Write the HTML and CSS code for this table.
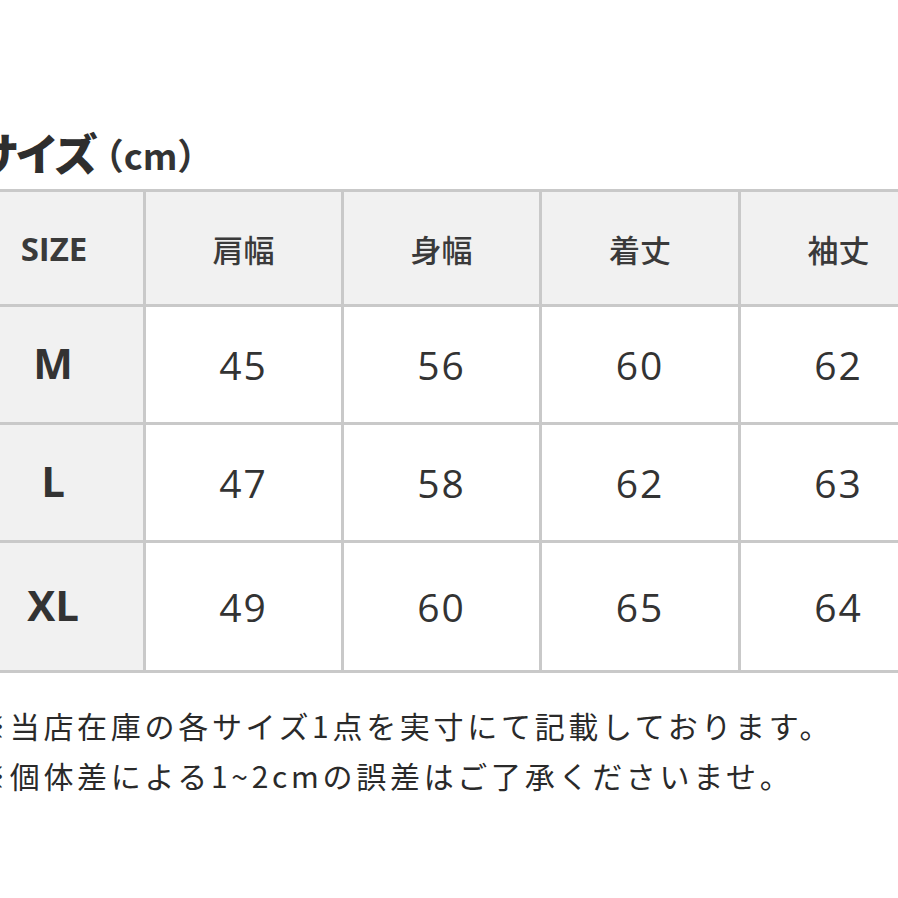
FILE: index.html
```html
<!DOCTYPE html>
<html lang="ja">
<head>
<meta charset="utf-8">
<link rel="stylesheet" href="styles.css">
</head>
<body>
<div class="page">
  <h1 class="title"><span class="title-main">サイズ</span><span class="title-unit">（cm）</span></h1>
  <div class="table">
    <div class="cell head first">SIZE</div>
    <div class="cell head">肩幅</div>
    <div class="cell head">身幅</div>
    <div class="cell head">着丈</div>
    <div class="cell head">袖丈</div>

    <div class="cell first size">M</div>
    <div class="cell num">45</div>
    <div class="cell num">56</div>
    <div class="cell num">60</div>
    <div class="cell num">62</div>

    <div class="cell first size">L</div>
    <div class="cell num">47</div>
    <div class="cell num">58</div>
    <div class="cell num">62</div>
    <div class="cell num">63</div>

    <div class="cell first size">XL</div>
    <div class="cell num">49</div>
    <div class="cell num">60</div>
    <div class="cell num">65</div>
    <div class="cell num">64</div>
  </div>
  <div class="notes">
    <p class="note">※当店在庫の各サイズ1点を実寸にて記載しております。</p>
    <p class="note">※個体差による1~2cmの誤差はご了承くださいませ。</p>
  </div>
</div>
</body>
</html>
```

FILE: styles.css
```css
html, body {
  margin: 0;
  padding: 0;
  background: #ffffff;
}
body {
  width: 898px;
  height: 898px;
  overflow: hidden;
  font-family: "Open Sans", "Noto Sans CJK JP", sans-serif;
  color: #333333;
}
.page {
  padding-top: 114px;
}
.title {
  margin: 0 0 0 -25px;
  height: 75px;
  display: flex;
  align-items: center;
  font-weight: normal;
  white-space: nowrap;
}
.title-main {
  font-family: "Noto Sans CJK JP", sans-serif;
  font-weight: 900;
  font-size: 44px;
  letter-spacing: -4px;
  line-height: 52px;
  color: #2e2e2e;
}
.title-unit {
  font-family: "Noto Sans CJK JP", sans-serif;
  font-weight: 700;
  font-size: 36px;
  line-height: 52px;
  margin-left: -6px;
  padding-top: 4px;
  color: #333333;
}
.table {
  margin-left: -40px;
  width: 976px;
  display: grid;
  grid-template-columns: 180px 195px 195px 196px 195px;
  grid-template-rows: 112px 115px 115px 127px;
  gap: 3px;
  padding: 3px;
  background: #c9c9c9;
}
.cell {
  background: #ffffff;
  display: flex;
  align-items: center;
  justify-content: center;
}
.head {
  background: #f1f1f1;
  font-family: "Noto Sans CJK JP", sans-serif;
  font-size: 31px;
  font-weight: 500;
  color: #3a3a3a;
}
.head.first {
  font-family: "Open Sans", "Noto Sans CJK JP", sans-serif;
  font-weight: 700;
  font-size: 33px;
  padding-left: 2px;
}
.first {
  background: #f1f1f1;
}
.size {
  font-weight: 700;
  font-size: 42px;
  color: #333333;
  padding-bottom: 4px;
}
.num {
  font-size: 39px;
  letter-spacing: 2px;
  color: #333333;
}
.notes {
  margin-top: 27px;
  margin-left: -24px;
}
.note {
  margin: 0;
  font-family: "Noto Sans CJK JP", sans-serif;
  font-size: 30px;
  letter-spacing: 3.7px;
  line-height: 50px;
  color: #2a2a2a;
  white-space: nowrap;
}
```
